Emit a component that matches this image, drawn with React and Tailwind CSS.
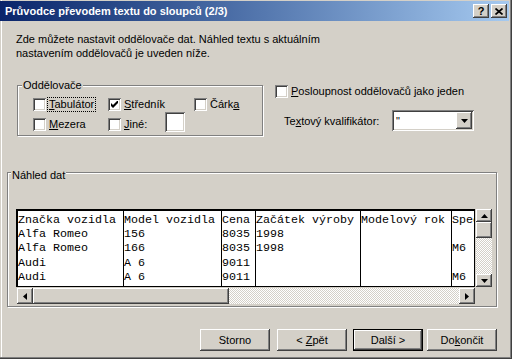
import React from "react";

const raised =
  "shadow-[inset_-1px_-1px_#404040,inset_1px_1px_#ffffff,inset_-2px_-2px_#808080,inset_2px_2px_#d4d0c8]";
const sunken =
  "shadow-[inset_1px_1px_#808080,inset_-1px_-1px_#ffffff,inset_2px_2px_#404040,inset_-2px_-2px_#d4d0c8]";
const hatch =
  "bg-[repeating-conic-gradient(#d4d0c8_0%_25%,#ffffff_0%_50%)] bg-size-[2px_2px]";

function Box({ checked }) {
  return (
    <span className={`flex h-[13px] w-[13px] shrink-0 items-center justify-center bg-white ${sunken}`}>
      {checked && (
        <svg width="7" height="7" viewBox="0 0 7 7">
          <polygon points="0,2 2,4 7,-1 7,2 2,7 0,5" fill="#000" />
        </svg>
      )}
    </span>
  );
}

function CheckItem({ checked, focus, children, className = "" }) {
  return (
    <div className={`flex items-center ${className}`}>
      <Box checked={checked} />
      <span
        className={`ml-[1px] whitespace-nowrap border px-[1px] leading-[13px] ${
          focus ? "border-dotted border-black" : "border-transparent"
        }`}
      >
        {children}
      </span>
    </div>
  );
}

function Tri({ dir }) {
  if (dir === "up")
    return (
      <svg width="7" height="4" viewBox="0 0 7 4">
        <polygon points="3.5,0 7,4 0,4" fill="#000" />
      </svg>
    );
  if (dir === "down")
    return (
      <svg width="7" height="4" viewBox="0 0 7 4">
        <polygon points="0,0 7,0 3.5,4" fill="#000" />
      </svg>
    );
  if (dir === "left")
    return (
      <svg width="4" height="7" viewBox="0 0 4 7">
        <polygon points="0,3.5 4,0 4,7" fill="#000" />
      </svg>
    );
  return (
    <svg width="4" height="7" viewBox="0 0 4 7">
      <polygon points="4,3.5 0,0 0,7" fill="#000" />
    </svg>
  );
}

const columns = [
  { w: "w-[105px]", border: false, cells: ["Značka vozidla", "Alfa Romeo", "Alfa Romeo", "Audi", "Audi"] },
  { w: "w-[98px]", border: true, cells: ["Model vozidla", "156", "166", "A 6", "A 6"] },
  { w: "w-[34px]", border: true, cells: ["Cena", "8035", "8035", "9011", "9011"] },
  { w: "w-[105px]", border: true, cells: ["Začátek výroby", "1998", "1998", "", ""] },
  { w: "w-[91px]", border: true, cells: ["Modelový rok", "", "", "", ""] },
  { w: "flex-1", border: true, cells: ["Specifikace", "", "M6", "", "M6"] },
];

function Button({ children, def, className = "" }) {
  return (
    <div
      className={`flex h-[22px] w-[70px] items-center justify-center bg-[#d4d0c8] leading-[13px] ${raised} ${
        def ? "border border-black" : ""
      } ${className}`}
    >
      <span className="whitespace-pre">{children}</span>
    </div>
  );
}

export default function App() {
  return (
    <div className="flex h-[359px] w-[512px] flex-col overflow-hidden bg-[#d4d0c8] font-['Liberation_Sans',Arial,sans-serif] text-[11px] text-black shadow-[inset_-1px_-1px_#404040,inset_-2px_-2px_#808080,inset_1px_0_#d4d0c8,inset_2px_0_#ffffff]">
      {/* Title bar */}
      <div className="mr-[3px] mt-[1px] flex h-[20px] items-center bg-linear-to-r from-[#0a246a] to-[#a6caf0] pl-[5px] pr-[2px]">
        <span className="flex-1 whitespace-nowrap text-[11px] font-bold leading-[14px] text-white">
          Průvodce převodem textu do sloupců (2/3)
        </span>
        <div className={`flex h-[14px] w-[16px] items-center justify-center bg-[#d4d0c8] text-[11px] font-bold leading-[11px] ${raised}`}>
          ?
        </div>
        <div className={`ml-[2px] flex h-[14px] w-[16px] items-center justify-center bg-[#d4d0c8] ${raised}`}>
          <svg width="8" height="7" viewBox="0 0 8 7">
            <path d="M0.5 0.5 L7.5 6.5 M7.5 0.5 L0.5 6.5" stroke="#000" strokeWidth="1.7" />
          </svg>
        </div>
      </div>

      {/* Description */}
      <p className="ml-[16px] mt-[11px] leading-[14px]">
        Zde můžete nastavit oddělovače dat. Náhled textu s aktuálním
        <br />
        nastavením oddělovačů je uveden níže.
      </p>

      {/* Delimiters row */}
      <div className="mt-[18px] flex items-start">
        <fieldset className="ml-[17px] h-[58px] w-[246px] border border-[#808080] shadow-[1px_1px_#ffffff,inset_1px_1px_#ffffff]">
          <legend className="ml-[4px] bg-[#d4d0c8] px-[1px] leading-[14px]">Oddělovače</legend>
          <div className="flex flex-col pl-[15px]">
            <div className="mt-[6px] flex h-[13px] items-center">
              <CheckItem focus className="w-[75px]">
                <u>T</u>abulátor
              </CheckItem>
              <CheckItem checked className="w-[86px]">
                <u>S</u>tředník
              </CheckItem>
              <CheckItem>
                Čárk<u>a</u>
              </CheckItem>
            </div>
            <div className="mt-[7px] flex h-[13px] items-center">
              <CheckItem className="w-[75px]">
                <u>M</u>ezera
              </CheckItem>
              <CheckItem className="w-[57px]">
                <u>J</u>iné:
              </CheckItem>
              <div className={`-mt-[6px] h-[20px] w-[20px] self-start bg-white ${sunken}`} />
            </div>
          </div>
        </fieldset>

        <div className="ml-[12px] mt-[7px] flex flex-col">
          <div className="flex h-[13px] items-center">
            <CheckItem>
              <u>P</u>osloupnost oddělovačů jako jeden
            </CheckItem>
          </div>
          <div className="mt-[12px] flex items-center">
            <span className="ml-[9px] w-[108px] whitespace-nowrap leading-[14px]">
              Te<u>x</u>tový kvalifikátor:
            </span>
            <div className={`flex h-[21px] w-[82px] items-center bg-white pl-[4px] ${sunken}`}>
              <span className="flex-1 leading-[14px]">"</span>
              <div className={`mr-[2px] flex h-[17px] w-[16px] items-center justify-center bg-[#d4d0c8] ${raised}`}>
                <Tri dir="down" />
              </div>
            </div>
          </div>
        </div>
      </div>

      {/* Preview */}
      <fieldset className="ml-[7px] mt-[26px] h-[145px] w-[490px] border border-[#808080] shadow-[1px_1px_#ffffff,inset_1px_1px_#ffffff]">
        <legend className="ml-[3px] bg-[#d4d0c8] px-[1px] pt-[6px] leading-[14px]">Náhled dat</legend>
        <div className="ml-[8px] mt-[27px] flex flex-col">
          <div className="flex h-[78px]">
            <div className="flex w-[459px] overflow-hidden border-b border-l-2 border-r border-t-2 border-black bg-white font-['Liberation_Mono','Courier_New',monospace] text-[11.67px]">
              {columns.map((c, i) => (
                <div
                  key={i}
                  className={`${c.w} h-full shrink-0 overflow-hidden pt-[2px] ${c.border ? "border-l border-black" : ""}`}
                >
                  {c.cells.map((t, j) => (
                    <div key={j} className="h-[14.2px] overflow-hidden whitespace-pre leading-[14.2px]">
                      {t || "\u00a0"}
                    </div>
                  ))}
                </div>
              ))}
            </div>
            <div className="ml-[1px] flex w-[16px] flex-col">
              <div className={`flex h-[13px] items-center justify-center bg-[#d4d0c8] ${raised}`}>
                <Tri dir="up" />
              </div>
              <div className={`h-[16px] bg-[#d4d0c8] ${raised}`} />
              <div className={`flex-1 ${hatch}`} />
              <div className={`flex h-[13px] items-center justify-center bg-[#d4d0c8] ${raised}`}>
                <Tri dir="down" />
              </div>
            </div>
          </div>
          <div className="ml-[1px] mt-[1px] flex h-[16px]">
            <div className={`flex w-[16px] items-center justify-center bg-[#d4d0c8] ${raised}`}>
              <Tri dir="left" />
            </div>
            <div className={`w-[196px] bg-[#d4d0c8] ${raised}`} />
            <div className={`w-[230px] ${hatch}`} />
            <div className={`flex w-[16px] items-center justify-center bg-[#d4d0c8] ${raised}`}>
              <Tri dir="right" />
            </div>
          </div>
        </div>
      </fieldset>

      {/* Buttons */}
      <div className="mt-[22px] flex">
        <Button className="ml-[200px]">Storno</Button>
        <Button className="ml-[7px]">
          {"< "}
          <u>Z</u>pět
        </Button>
        <Button def className="ml-[6px]">
          {"Další >"}
        </Button>
        <Button className="ml-[4px]">
          Do<u>k</u>ončit
        </Button>
      </div>
    </div>
  );
}
